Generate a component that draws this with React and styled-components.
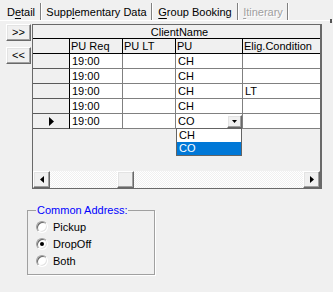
import React from 'react';
import styled, { createGlobalStyle } from 'styled-components';

const GlobalStyle = createGlobalStyle`
  html, body {
    margin: 0;
    padding: 0;
    background: #f0f0f0;
  }
  body {
    font-family: "Liberation Sans", Arial, sans-serif;
    font-size: 11px;
    color: #000;
  }
  * {
    box-sizing: border-box;
  }
`;

const Page = styled.div`
  width: 333px;
  height: 292px;
  background: #f0f0f0;
  overflow: hidden;
  display: flex;
  flex-direction: column;
`;

const TabStrip = styled.div`
  display: flex;
  height: 21px;
  padding: 3px 0 0 2px;
  border-bottom: 1px solid #fff;
`;

const Tab = styled.div`
  width: ${(p) => p.$width}px;
  height: 17px;
  padding-top: 1px;
  line-height: 16px;
  text-align: center;
  white-space: nowrap;
  border-right: 1px solid #808080;
  box-shadow: 1px 0 0 #fff;
  margin-right: 1px;
  color: ${(p) => (p.$disabled ? '#a0a0a0' : '#000')};
  text-shadow: ${(p) => (p.$disabled ? '1px 1px 0 #fff' : 'none')};
  u {
    text-decoration: underline;
    text-underline-offset: 2px;
  }
`;

const CornerMark = styled.div`
  width: 2px;
  height: 4px;
  margin: 16px 1px 0 auto;
  background: #555;
`;

const Body = styled.div`
  display: flex;
  padding-top: 3px;
`;

const SideButtons = styled.div`
  display: flex;
  flex-direction: column;
  gap: 6px;
  width: 25px;
  margin-left: 6px;
`;

const raised = `
  background: #f0f0f0;
  border: 1px solid;
  border-color: #fff #696969 #696969 #fff;
  box-shadow: inset -1px -1px 0 #a0a0a0, inset 1px 1px 0 #e3e3e3;
`;

const NavButton = styled.div`
  ${raised}
  height: 17px;
  display: flex;
  align-items: center;
  justify-content: center;
  font-size: 11px;
  line-height: 13px;
  letter-spacing: 0;
`;

const GridFrame = styled.div`
  position: relative;
  margin-left: 1px;
  width: 290px;
  height: 165px;
  border: 1px solid #696969;
  border-right-width: 2px;
  display: flex;
  flex-direction: column;
`;

const Table = styled.div`
  display: grid;
  grid-template-columns: 37px 53px 53px 67px 1fr;
  grid-template-rows: 14px;
  grid-auto-rows: 15px;
`;

const TitleCell = styled.div`
  grid-column: 1 / -1;
  background: #f0f0f0;
  border-bottom: 1px solid #000;
  text-align: center;
  padding: 1px 0 0 6px;
  line-height: 12px;
`;

const HeadCell = styled.div`
  background: #f0f0f0;
  border-right: ${(p) => (p.$last ? 'none' : '1px solid #000')};
  border-bottom: 1px solid #000;
  padding-left: 1px;
  line-height: 14px;
  white-space: nowrap;
  overflow: hidden;
`;

const IndCell = styled.div`
  background: #f0f0f0;
  border-right: 1px solid #000;
  border-bottom: 1px solid ${(p) => (p.$head ? '#000' : '#5a5a5a')};
  display: flex;
  align-items: center;
  justify-content: center;
`;

const Cell = styled.div`
  background: #fff;
  border-right: ${(p) => (p.$last ? 'none' : '1px solid #808080')};
  border-bottom: 1px solid #808080;
  padding: 1px 0 0 2px;
  line-height: 13px;
  white-space: nowrap;
  overflow: hidden;
  display: flex;
  align-items: flex-start;
`;

const ComboButton = styled.div`
  ${raised}
  width: 15px;
  height: 13px;
  margin: 0 0 0 auto;
  display: flex;
  align-items: center;
  justify-content: center;
`;

const Filler = styled.div`
  flex: 1;
`;

const HScroll = styled.div`
  display: flex;
  height: 17px;
`;

const ScrollButton = styled.div`
  ${raised}
  width: 17px;
  height: 17px;
  display: flex;
  align-items: center;
  justify-content: center;
`;

const Track = styled.div`
  flex: 1;
  display: flex;
  background-color: #fff;
  background-image: repeating-conic-gradient(#f0f0f0 0 25%, #fff 0 50%);
  background-size: 2px 2px;
`;

const Thumb = styled.div`
  ${raised}
  width: 17px;
  height: 17px;
  margin-left: ${(p) => p.$offset}px;
`;

const DropList = styled.div`
  position: absolute;
  left: 143px;
  top: 103px;
  width: 66px;
  border: 1px solid #646464;
  background: #fff;
`;

const DropItem = styled.div`
  height: 13px;
  line-height: 13px;
  padding-left: 2px;
  background: ${(p) => (p.$selected ? '#0078d7' : '#fff')};
  color: ${(p) => (p.$selected ? '#fff' : '#000')};
`;

const GroupBox = styled.fieldset`
  margin: 15px 0 0 27px;
  width: 128px;
  padding: 1px 8px 5px 8px;
  border: 1px solid #a0a0a0;
  box-shadow: 1px 1px 0 #fff;
`;

const Legend = styled.legend`
  padding: 0 1px;
  color: #0000ff;
  line-height: 13px;
`;

const RadioRow = styled.div`
  display: flex;
  align-items: center;
  gap: 5px;
  height: 17px;
  color: #000;
`;

const RadioMark = styled.span`
  position: relative;
  width: 12px;
  height: 12px;
  border-radius: 50%;
  background: #fff;
  border: 1px solid;
  border-color: #a0a0a0 #fff #fff #a0a0a0;
  box-shadow: inset 1px 1px 0 #696969, inset -1px -1px 0 #e3e3e3;
  &::after {
    content: '';
    display: ${(p) => (p.$checked ? 'block' : 'none')};
    position: absolute;
    left: 3px;
    top: 3px;
    width: 4px;
    height: 4px;
    border-radius: 50%;
    background: #000;
  }
`;

const Triangle = ({ dir }) => {
  if (dir === 'left') {
    return (
      <svg width="4" height="7" viewBox="0 0 4 7"><polygon points="4,0 4,7 0,3.5" fill="#000" /></svg>
    );
  }
  if (dir === 'right') {
    return (
      <svg width="4" height="7" viewBox="0 0 4 7"><polygon points="0,0 4,3.5 0,7" fill="#000" /></svg>
    );
  }
  if (dir === 'down') {
    return (
      <svg width="5" height="3" viewBox="0 0 5 3"><polygon points="0,0 5,0 2.5,3" fill="#000" /></svg>
    );
  }
  return (
    <svg width="5" height="9" viewBox="0 0 5 9"><polygon points="0,0 5,4.5 0,9" fill="#000" /></svg>
  );
};

const tabs = [
  { label: <>D<u>e</u>tail</>, width: 39 },
  { label: <>Supp<u>l</u>ementary Data</>, width: 110 },
  { label: <><u>G</u>roup Booking</>, width: 85 },
  { label: <><u>I</u>tinerary</>, width: 49, disabled: true },
];

const columns = ['PU Req', 'PU LT', 'PU', 'Elig.Condition'];

const rows = [
  { req: '19:00', lt: '', pu: 'CH', elig: '' },
  { req: '19:00', lt: '', pu: 'CH', elig: '' },
  { req: '19:00', lt: '', pu: 'CH', elig: 'LT' },
  { req: '19:00', lt: '', pu: 'CH', elig: '' },
  { req: '19:00', lt: '', pu: 'CO', elig: '', current: true },
];

const addresses = [
  { label: 'Pickup' },
  { label: 'DropOff', checked: true },
  { label: 'Both' },
];

const App = () => (
  <Page>
    <GlobalStyle />
    <TabStrip>
      {tabs.map((t, i) => (
        <Tab key={i} $width={t.width} $disabled={t.disabled}>{t.label}</Tab>
      ))}
      <CornerMark />
    </TabStrip>
    <Body>
      <SideButtons>
        <NavButton>&gt;&gt;</NavButton>
        <NavButton>&lt;&lt;</NavButton>
      </SideButtons>
      <GridFrame>
        <Table>
          <TitleCell>ClientName</TitleCell>
          <IndCell $head />
          {columns.map((c, i) => (
            <HeadCell key={c} $last={i === columns.length - 1}>{c}</HeadCell>
          ))}
          {rows.map((r, i) => (
            <React.Fragment key={i}>
              <IndCell>{r.current && <Triangle dir="mark" />}</IndCell>
              <Cell>{r.req}</Cell>
              <Cell>{r.lt}</Cell>
              <Cell>
                {r.pu}
                {r.current && (
                  <ComboButton><Triangle dir="down" /></ComboButton>
                )}
              </Cell>
              <Cell $last>{r.elig}</Cell>
            </React.Fragment>
          ))}
        </Table>
        <Filler />
        <HScroll>
          <ScrollButton><Triangle dir="left" /></ScrollButton>
          <Track>
            <Thumb $offset={67} />
          </Track>
          <ScrollButton><Triangle dir="right" /></ScrollButton>
        </HScroll>
        <DropList>
          <DropItem>CH</DropItem>
          <DropItem $selected>CO</DropItem>
        </DropList>
      </GridFrame>
    </Body>
    <GroupBox>
      <Legend>Common Address:</Legend>
      {addresses.map((a) => (
        <RadioRow key={a.label}>
          <RadioMark $checked={a.checked} />
          {a.label}
        </RadioRow>
      ))}
    </GroupBox>
  </Page>
);

export default App;
